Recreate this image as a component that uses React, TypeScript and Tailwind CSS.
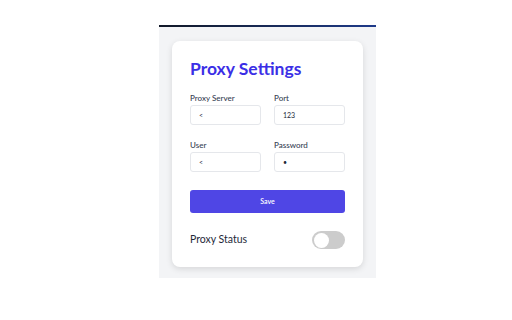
import { useState } from 'react'

const Field = ({ label, value, type = 'text' }: { label: string; value: string; type?: string }) => (
  <div className="flex flex-col">
    <label className="mb-[1px] text-[8px] leading-[12px] font-medium text-gray-700">{label}</label>
    <input
      type={type}
      defaultValue={value}
      className="h-[20px] w-full rounded-[3px] border border-gray-200 bg-white px-[8px] text-[7px] text-gray-800 outline-none"
    />
  </div>
)

const ProxySettings = () => {
  const [enabled, setEnabled] = useState(false)

  return (
    <div className="flex h-[320px] w-[512px] bg-white pt-[25px]" style={{ fontFamily: 'Lato, sans-serif' }}>
      <div className="ml-[159px] flex h-[253px] w-[217px] flex-col bg-[#f3f4f6]">
        <div className="h-[2px] bg-gradient-to-r from-[#111827] to-[#1e3a8a]" />
        <div className="flex-1 px-[13px] pt-[14px] pb-[11px]">
          <div className="rounded-[8px] bg-white px-[18px] pt-[16px] pb-[18px] shadow-[0_2px_6px_rgba(0,0,0,0.12)]">
            <h1 className="text-[17.5px] leading-[24px] font-bold text-[#3b2fe6]">Proxy Settings</h1>
            <div className="mt-[11px] grid grid-cols-2 gap-x-[13px] gap-y-[14px]">
              <Field label="Proxy Server" value="<" />
              <Field label="Port" value="123" />
              <Field label="User" value="<" />
              <Field label="Password" value="x" type="password" />
            </div>
            <button className="mt-[18px] h-[23px] w-full rounded-[3px] bg-[#4f46e5] text-[7px] font-semibold text-white">
              Save
            </button>
            <div className="mt-[18px] flex items-center justify-between">
              <span className="text-[10.5px] text-gray-800">Proxy Status</span>
              <button
                onClick={() => setEnabled(!enabled)}
                className={`flex h-[18px] w-[33px] items-center rounded-full px-[2px] ${enabled ? 'justify-end bg-[#4f46e5]' : 'justify-start bg-[#cccccc]'}`}
              >
                <span className="h-[15px] w-[15px] rounded-full bg-white" />
              </button>
            </div>
          </div>
        </div>
      </div>
    </div>
  )
}

export default function App() {
  return <ProxySettings />
}
